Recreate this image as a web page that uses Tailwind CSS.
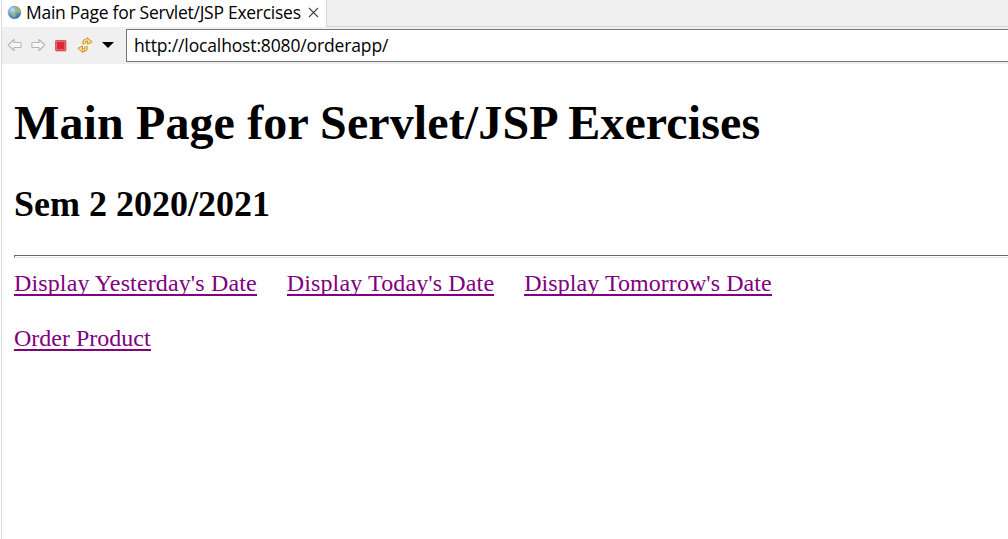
<!DOCTYPE html>
<html lang="en">
<head>
<meta charset="utf-8">
<title>Main Page for Servlet/JSP Exercises</title>
<script src="https://cdn.jsdelivr.net/npm/@tailwindcss/browser@4"></script>
</head>
<body class="h-[539px] overflow-hidden bg-white pl-px text-black">
<div class="h-[539px] border-l border-[#d9d9d9]">
  <div class="flex h-[27px] bg-[#f0f0f0] font-['Open_Sans',sans-serif]">
    <div class="flex w-[324px] shrink-0 items-center bg-white pl-[5px]">
      <svg class="mb-[3px] size-[15px] shrink-0" viewBox="0 0 15 15">
        <defs><radialGradient id="sea" cx=".35" cy=".3" r=".75"><stop offset="0" stop-color="#c3e3f5"/><stop offset=".5" stop-color="#64a5d2"/><stop offset="1" stop-color="#326699"/></radialGradient></defs>
        <circle cx="7.5" cy="7.5" r="6.4" fill="url(#sea)" stroke="#7f9db6" stroke-width=".6"/>
        <path d="M7.5 2l3-.3 2.4 2.7.6 3-1.8 1-1.2-1.5L9 6.3 7.8 4.5zM4.5 7.2l2.8.7 1.4 1.6-.6 2.2-1.3 1.3-1-2.2-1.3-1.5z" fill="#b0b568" opacity=".85"/>
      </svg>
      <span class="mb-[3px] ml-[4px] w-[275px] shrink-0 whitespace-nowrap text-[17.5px] leading-[24px] tracking-[-0.27px]">Main Page for Servlet/JSP Exercises</span>
      <svg class="mb-[3px] ml-[7px] size-[11px] shrink-0" viewBox="0 0 11 11"><path d="M1 1l9 9M10 1L1 10" stroke="#444" stroke-width="1.1"/></svg>
    </div>
    <div class="flex-1 border-b border-l border-[#d5d5d5]"></div>
  </div>
  <div class="flex h-[37px] bg-[#f0f0f0] pt-[2px] font-['Open_Sans',sans-serif]">
    <div class="flex h-[32px] w-[124px] shrink-0 items-center pl-[5px]">
      <svg class="h-[14px] w-[16px]" viewBox="0 0 16 14"><path d="M1.2 7L7 1.5v3h6.2q1 0 1 1v3q0 1-1 1H7v3z" fill="#f7f7f7" stroke="#b5b5b5" stroke-width="1.1" stroke-linejoin="round"/></svg>
      <svg class="ml-[7px] h-[14px] w-[16px]" viewBox="0 0 16 14"><path d="M14.8 7L9 1.5v3H2.8q-1 0-1 1v3q0 1 1 1H9v3z" fill="#f7f7f7" stroke="#b5b5b5" stroke-width="1.1" stroke-linejoin="round"/></svg>
      <svg class="ml-[8px] size-[13px]" viewBox="0 0 13 13"><rect x="1.5" y="1.5" width="10.4" height="10.4" rx=".8" fill="#df2634" stroke="#cf5f68"/><rect x="2.6" y="2.6" width="8.2" height="8.2" fill="none" stroke="#ef7b82" stroke-width=".8"/></svg>
      <svg class="ml-[10px] size-[16px]" viewBox="0 0 16 16" fill="none" stroke-linejoin="round">
        <path d="M7.2 7Q6.2 3 10.5 2.9M8.8 9.4Q9.8 13.4 5.5 13.5" stroke="#c58a28" stroke-width="3.4"/>
        <path d="M10.3.8l4.9 4-4.6 2.5zM5.7 15.4l-4.9-4 4.6-2.5z" fill="#fbdc83" stroke="#c58a28" stroke-width=".9"/>
        <path d="M7.2 6.5Q6.4 3 10.8 2.9M8.8 9.9Q9.6 13.4 5.2 13.5" stroke="#fbdc83" stroke-width="1.6"/>
      </svg>
      <svg class="ml-[9px] h-[6px] w-[12px]" viewBox="0 0 12 6"><path d="M0 0h12L6 6z"/></svg>
    </div>
    <div class="h-[33px] flex-1 border-y border-l border-[#767676] bg-white pl-[7px] text-[17.5px] leading-[30px] tracking-[-0.14px]">http://localhost:8080/orderapp/</div>
  </div>
  <main class="pl-[12px] font-['Liberation_Serif',serif]">
    <h1 class="pt-[31px] text-[48px] leading-[56px] font-bold tracking-[0.12px] whitespace-nowrap">Main Page for Servlet/JSP Exercises</h1>
    <h2 class="mt-[32px] text-[36px] leading-[42px] font-bold">Sem 2 2020/2021</h2>
    <hr class="mt-[30px] h-[3px] border-t border-b border-l border-t-[#696969] border-b-[#e3e3e3] border-l-[#696969]">
    <nav class="mt-[11px] flex gap-[30px] text-[24px] leading-[28px] whitespace-nowrap text-[#800080]">
      <a class="h-[27px] border-b-2 border-[#800080] tracking-[0.13px]">Display Yesterday's Date</a>
      <a class="h-[27px] border-b-2 border-[#800080] tracking-[0.13px]">Display Today's Date</a>
      <a class="h-[27px] border-b-2 border-[#800080] tracking-[0.06px]">Display Tomorrow's Date</a>
    </nav>
    <div class="mt-[28px] flex text-[24px] leading-[28px] text-[#800080]"><a class="h-[27px] border-b-2 border-[#800080]">Order Product</a></div>
  </main>
</div>
</body>
</html>
